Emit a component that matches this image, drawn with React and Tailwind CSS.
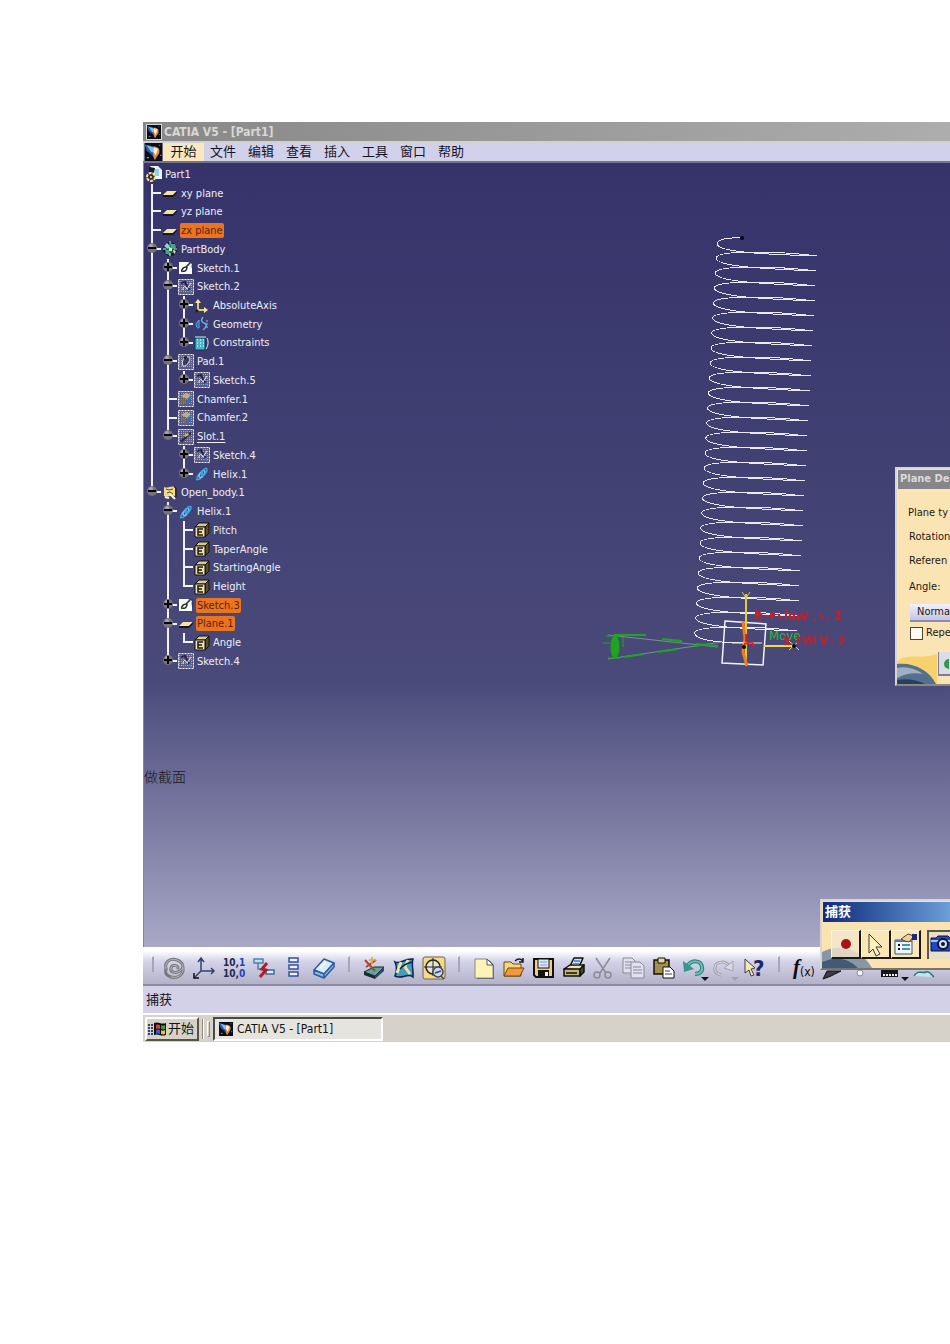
const menus = ['开始', '文件', '编辑', '查看', '插入', '工具', '窗口', '帮助'];

// guides: one char per column. ' ' empty, '|' line, 't' branch, 'l' last branch,
// '+' / '-' toggle, 'p' / 'm' toggle on the last item
const tree = [
  { guides: '', icon: 'part', label: 'Part1' },
  { guides: 't', icon: 'plane', label: 'xy plane' },
  { guides: 't', icon: 'plane', label: 'yz plane' },
  { guides: 't', icon: 'plane', label: 'zx plane', selected: true },
  { guides: '-', icon: 'body', label: 'PartBody' },
  { guides: '|+', icon: 'sketch', label: 'Sketch.1' },
  { guides: '|-', icon: 'hiddenSketch', label: 'Sketch.2' },
  { guides: '||+', icon: 'axis', label: 'AbsoluteAxis' },
  { guides: '||+', icon: 'geometry', label: 'Geometry' },
  { guides: '||p', icon: 'constraints', label: 'Constraints' },
  { guides: '|-', icon: 'pad', label: 'Pad.1' },
  { guides: '||p', icon: 'hiddenSketch', label: 'Sketch.5' },
  { guides: '|t', icon: 'chamfer', label: 'Chamfer.1' },
  { guides: '|t', icon: 'chamfer', label: 'Chamfer.2' },
  { guides: '|m', icon: 'slot', label: 'Slot.1', current: true },
  { guides: '| +', icon: 'hiddenSketch', label: 'Sketch.4' },
  { guides: '| p', icon: 'helix', label: 'Helix.1' },
  { guides: 'm', icon: 'openBody', label: 'Open_body.1' },
  { guides: ' -', icon: 'helix', label: 'Helix.1' },
  { guides: ' |t', icon: 'param', label: 'Pitch' },
  { guides: ' |t', icon: 'param', label: 'TaperAngle' },
  { guides: ' |t', icon: 'param', label: 'StartingAngle' },
  { guides: ' |l', icon: 'param', label: 'Height' },
  { guides: ' +', icon: 'sketch', label: 'Sketch.3', selected: true },
  { guides: ' -', icon: 'plane', label: 'Plane.1', selected: true },
  { guides: ' |l', icon: 'param', label: 'Angle' },
  { guides: ' p', icon: 'hiddenSketch', label: 'Sketch.4' },
];

function CatiaLogo({ className }) {
  return (
    <svg viewBox="0 0 16 16" className={className} aria-hidden="true">
      <rect width="16" height="16" fill="#0a0d1a" />
      <path d="M0 1l8 2 3 5-1 7-4-5-4-3z" fill="#2f5f9e" />
      <path d="M2 2l6 2 2 5-4-1z" fill="#8cc0e8" />
      <path d="M8 3c4 0 6 2 5 6l-4 6c-1-3-2-6-1-12z" fill="#e08a48" />
      <path d="M8 4l4 1-2 6-2-3z" fill="#fff3d0" />
      <path d="M13 2h1M14 11h1M2 13h2" stroke="#8f9cb8" />
    </svg>
  );
}

const hatch = (
  <g>
    <rect x="0" y="0" width="16" height="16" fill="#5c5c86" />
    <rect x="0.5" y="0.5" width="15" height="15" fill="none" stroke="#f0f0f6" strokeDasharray="2 1" />
    <path
      d="M1 2.5h14M1 4.5h14M1 6.5h14M1 8.5h14M1 10.5h14M1 12.5h14"
      stroke="#c0c0d4"
      strokeDasharray="1 1"
      opacity="0.7"
    />
  </g>
);

const treeIcons = {
  part: (
    <>
      <path d="M4 0h8l4 4v9H6V3z" fill="#e9f5ff" />
      <path d="M9 3l4 0 0 7-4 0z" fill="#8fd2ee" />
      <path d="M3 1l6 1-1 5-5-1z" fill="#16201a" />
      <circle cx="5" cy="11" r="4" fill="#3a3424" stroke="#f0e2ae" strokeWidth="2" strokeDasharray="3 1" />
      <circle cx="5" cy="11" r="1" fill="#f0e2ae" />
    </>
  ),
  plane: (
    <>
      <path d="M5 6h10l-4 4H1z" fill="#f3e3a6" />
      <path d="M1 10h10l4-4v2l-4 4H1z" fill="#17161a" />
    </>
  ),
  body: (
    <>
      <circle cx="8" cy="8" r="6" fill="#1e5b52" stroke="#0b1116" strokeWidth="2" strokeDasharray="3 2" />
      <path d="M2 5l3-3 3 3-2 3z" fill="#7fd6dd" />
      <path d="M8 3l5 0 1 4-4 1zM3 9l4 0 1 5-4-1z" fill="#46a48f" />
      <path d="M7 6l3 1 0 3-3 0zM11 9l3 1-2 3z" fill="#f0e29a" />
      <path d="M1 8h3M8 0v3M12 8h3M8 12v3" stroke="#c7e7ea" />
    </>
  ),
  sketch: (
    <>
      <path d="M1 2h13v12H1z" fill="#fbfbf6" />
      <path d="M4 12c-1-3 2-5 4-5l4-4M5 11c2 1 4-1 4-4" fill="none" stroke="#1c2b33" strokeWidth="1.500" />
      <path d="M10 2h5v10c-1-4-2-5-1-8z" fill="#2c3a66" />
    </>
  ),
  hiddenSketch: (
    <>
      {hatch}
      <path d="M3 4l4-1 2 4 3 5" stroke="#25254a" strokeWidth="2" fill="none" />
      <path d="M5 11c0-5 3-4 4-1l4-6" stroke="#f0f0f5" fill="none" />
      <path d="M10 13l2-3 2 4z" fill="#3f86d6" />
    </>
  ),
  axis: (
    <>
      <path d="M4 3v9h7" fill="none" stroke="#e8c860" strokeWidth="2" />
      <path d="M1 5l3-4 3 4zM10 9l4 3-4 3z" fill="#f6e6a0" />
      <path d="M4 12l-2 2" stroke="#17161a" strokeWidth="2" />
    </>
  ),
  geometry: (
    <>
      <path d="M2 8l3-4v8c-2 0-3-1-3-4z" fill="#2d5fae" stroke="#57a7e6" />
      <path d="M9 1c-2 3-2 5 1 6s3 4-1 7" fill="none" stroke="#6aa8ee" strokeWidth="1.500" />
      <path d="M13 4v8" stroke="#8fc3ee" strokeDasharray="2 1" />
    </>
  ),
  constraints: (
    <>
      <path d="M1 3h10v12H1z" fill="#48b5c8" stroke="#0c3a52" />
      <path d="M3 5h7M3 8h7M3 11h7" stroke="#c4eff2" strokeWidth="1.500" strokeDasharray="1 2" />
      <path d="M1 2h11M13 3c2 4 1 8-1 11" stroke="#d9f4f8" fill="none" />
    </>
  ),
  pad: (
    <>
      {hatch}
      <path d="M5 12c-2-5 1-9 5-9s1 7-3 9z" fill="#3a3a60" stroke="#e3e3ee" />
      <path d="M6 4l3-1" stroke="#17172c" strokeWidth="2" />
    </>
  ),
  chamfer: (
    <>
      {hatch}
      <path d="M3 5l5-3 5 2-4 4z" fill="#d0c27f" opacity="0.8" />
      <path d="M3 6l5 3v5l-5-3z" fill="#77724e" opacity="0.8" />
      <path d="M9 9l4-4v5l-4 4z" fill="#3472b8" />
    </>
  ),
  slot: (
    <>
      {hatch}
      <path d="M2 11c4-1 6-7 11-8v3c-4 1-6 6-9 8z" fill="#2d2d3c" />
      <path d="M6 6l4-2 1 2-4 2z" fill="#c9bb70" />
    </>
  ),
  helix: (
    <g fill="none" stroke="#3ba4e6" strokeWidth="1.500">
      <ellipse cx="6" cy="10" rx="2" ry="4" transform="rotate(35 6 10)" />
      <ellipse cx="8" cy="8" rx="2" ry="4" transform="rotate(35 8 8)" stroke="#7cc8f2" />
      <ellipse cx="10" cy="6" rx="2" ry="4" transform="rotate(35 10 6)" />
      <path d="M2 14l2-1M12 3l1-1" />
    </g>
  ),
  openBody: (
    <>
      <path d="M2 2c4 2 7-2 11 0v9c-4-2-7 2-11 0z" fill="#f2d983" />
      <path d="M4 4l3 1 4-1M5 8l3-1 3 2" stroke="#5d4a1d" fill="none" />
      <path d="M8 9l5 5M3 12l4 1" stroke="#fff6d0" strokeWidth="2" />
      <path d="M12 2l2 1v9" stroke="#17161a" fill="none" />
    </>
  ),
  param: (
    <>
      <path d="M1 5l4-4h10l-4 4z" fill="#d8c896" stroke="#14110a" />
      <path d="M11 5l4-4v10l-4 4z" fill="#5b4d2c" stroke="#14110a" />
      <path d="M1 5h10v10H1z" fill="#f0e2b0" stroke="#14110a" />
      <path d="M9 7H4v6h5M4 10h4" stroke="#1b170e" fill="none" strokeWidth="1.500" />
    </>
  ),
};

function Guide({ type }) {
  if (type === ' ') return <span className="w-4 shrink-0" />;
  const isToggle = '+-pm'.includes(type);
  const isLast = 'lpm'.includes(type);
  return (
    <span className="relative w-4 shrink-0 self-stretch">
      <span className={`absolute left-[7px] top-0 w-[2px] bg-[#f1f1f6] ${isLast ? 'h-1/2' : 'h-full'}`} />
      {type !== '|' && <span className="absolute left-2 top-[8px] h-[2px] w-[9px] bg-[#f1f1f6]" />}
      {isToggle && (
        <button
          aria-label={type === '+' || type === 'p' ? 'Expand' : 'Collapse'}
          className="absolute left-[3px] top-[3px] block h-[10px] w-[10px]"
        >
          <svg viewBox="0 0 10 10" className="block h-full w-full">
            <circle cx="5" cy="5" r="5" fill="#74747e" />
            <circle cx="4" cy="3" r="2" fill="#a5a5ad" />
            <path d={type === '+' || type === 'p' ? 'M1 5h8M5 1v8' : 'M1 5h8'} stroke="#08080c" strokeWidth="2" />
          </svg>
        </button>
      )}
    </span>
  );
}

function TreeRow({ item }) {
  let labelClass = 'text-[#eeeef4]';
  if (item.selected) labelClass = 'bg-[#ea7420] text-[#5c2208]';
  if (item.current) labelClass = 'text-[#eeeef4] underline underline-offset-2';
  return (
    <li className="flex flex-1 items-center">
      {[...item.guides].map((type, i) => (
        <Guide key={i} type={type} />
      ))}
      <svg viewBox="0 0 16 16" className="ml-[2px] h-4 w-4 shrink-0" aria-hidden="true">
        {treeIcons[item.icon]}
      </svg>
      <span className={`ml-[2px] rounded-xs px-px text-[11px] leading-[15px] whitespace-nowrap ${labelClass}`}>
        {item.label}
      </span>
    </li>
  );
}

// every turn leans 0.85px to the left and drops 15px
function Spring() {
  const turns = 26;
  let d = 'M142 12C126 11 117 14 117 18C118 25 150 28 217 30';
  for (let i = 0; i < turns; i++) {
    const right = 217 - i * 0.8;
    const left = 116 - i * 0.85;
    const y = 30 + i * 15;
    d += `M${right} ${y}C${right - 37} ${y - 5} ${left} ${y - 6} ${left} ${y + 2}`;
    if (i < turns - 1) {
      d += `C${left} ${y + 11} ${left + 54} ${y + 13} ${right - 1} ${y + 15}`;
    } else {
      d += `C${left} ${y + 9} ${left + 24} ${y + 12} ${left + 52} ${y + 12}`;
    }
  }
  return <path d={d} fill="none" stroke="#e9e9ee" strokeWidth="1" shapeRendering="crispEdges" />;
}

function Scene() {
  return (
    <svg viewBox="0 0 260 450" className="absolute top-[63px] left-[456px] h-[450px] w-[260px]">
      <Spring />
      <circle cx="142" cy="12" r="2" fill="#050508" />
      {/* view marker */}
      <g stroke="#1ea51e" fill="none">
        <path d="M8 409l110 12M8 433l114-17" stroke="#6c9a80" />
        <path d="M14 409h32M62 413l20 2M96 418l22 2M24 431l20-3M58 426l20-3M94 420l16-2" strokeWidth="2" />
        <path d="M3 417h8M6 410h14M8 432h12M23 411v10" />
        <ellipse cx="15" cy="421" rx="4" ry="11" fill="#1ea51e" />
      </g>
      {/* plane handle */}
      <path d="M125 395l41 3-3 41-41-2z" fill="none" stroke="#f4f4f4" strokeWidth="1.500" />
      <path d="M146 368v72" stroke="#e2ca42" strokeWidth="2" />
      <path d="M142 366l4 6 4-6" stroke="#e2ca42" fill="none" />
      <path d="M143 396l2 16-2 14 4 14" stroke="#f07a1c" strokeWidth="3" fill="none" />
      <path d="M132 417h30" stroke="#eee" />
      <path d="M144 418l8-2 2 5M146 408v8" stroke="#d92222" strokeWidth="2" fill="none" />
      <path d="M164 420h30" stroke="#e8dc48" strokeWidth="2" />
      <path d="M189 415l10 9M199 415l-10 9" stroke="#e8dc48" />
      <circle cx="194" cy="420" r="2" fill="#08080a" />
      <circle cx="144" cy="421" r="2" fill="#08080a" />
      <text x="169" y="414" fill="#22c03a" fontSize="13">Move</text>
      {/* broken up angle labels */}
      <g stroke="#c81e28" fill="none">
        <path
          d="M156 384v9M156 384l5 4-5 2 6 4M166 390h3M172 385v9M170 388h5M178 388l4 5M186 384v10M190 388h4v5h-4zM198 387v7l4-6 3 6 3-9M214 394h2M220 388l3 5M228 393h2M236 385l4 2-4 6h5"
          strokeWidth="2"
        />
        <path
          d="M184 410l5 9M189 411l-4 8M198 409v9M203 410l3 8 3-8 3 8M215 409v9M220 409l4 9 4-9M232 417h2M239 410l5 3-4 6"
          strokeWidth="2"
        />
      </g>
    </svg>
  );
}

const toolIcons = {
  update: (
    <g fill="none" strokeLinecap="round">
      <path d="M4 13C2 5 9 2 15 4s8 8 3 11-10 1-9-3 7-3 7 0" stroke="#77777f" strokeWidth="3" />
      <path d="M21 12c1 7-6 11-12 9s-6-5-5-8" stroke="#77777f" strokeWidth="3" />
      <path d="M4 13C2 5 9 2 15 4s8 8 3 11-10 1-9-3 7-3 7 0M21 12c1 7-6 11-12 9" stroke="#b9b9be" />
    </g>
  ),
  axisSystem: (
    <g fill="none" stroke="#2c4474" strokeWidth="1.500">
      <path d="M9 15V3M6 6l3-4 3 4M9 15h13M19 12l3 3-3 3M9 15l-7 7" />
      <path d="M2 17v5h5" stroke="#111" />
    </g>
  ),
  coords: (
    <g fontSize="10" fontWeight="bold" fill="#222a52">
      <text x="1" y="10">10,</text>
      <text x="17" y="10" fill="#2440b8">1</text>
      <text x="1" y="21">10,</text>
      <text x="17" y="21" fill="#2440b8">0</text>
    </g>
  ),
  compare: (
    <g fill="none" strokeWidth="1.500">
      <path d="M2 3h9v4H2zM6 7v6h5" stroke="#4488a8" />
      <path d="M14 14h8v4h-8z" stroke="#46699b" fill="#e4ecff" />
      <path d="M15 7l-5 6 4 1-6 7" stroke="#b01c28" strokeWidth="3" />
    </g>
  ),
  list: (
    <g fill="#eef0ff" stroke="#34509c" strokeWidth="1.500">
      <path d="M7 2h9v4H7zM7 9h9v4H7zM7 16h9v4H7z" />
    </g>
  ),
  catalog: (
    <g stroke="#2a5da0" strokeWidth="1.500" strokeLinejoin="round">
      <path d="M2 14L12 3l10 4-10 11z" fill="#d8ebf9" />
      <path d="M2 14v4l10 4v-4zM12 18v4l10-11V7z" fill="#8fb8e4" />
      <path d="M8 12l6-6" stroke="#fff" />
    </g>
  ),
  sketcher: (
    <g>
      <path d="M2 16l10-5 10 0-9 9z" fill="#5aa79b" stroke="#16222c" />
      <path d="M2 16l11 4v3L2 19z" fill="#1d2833" />
      <path d="M13 20l9-9v4l-9 8z" fill="#2f4a66" />
      <path d="M3 4l10 11M4 11l10-7" stroke="#b3422a" strokeWidth="2" />
      <path d="M10 1v7M7 4h7" stroke="#eba931" strokeWidth="1.500" />
    </g>
  ),
  surface: (
    <g stroke="#0f2550" strokeWidth="1.500">
      <path d="M3 6c5 3 9-4 18-3-2 6 1 13 0 18-5-5-11 3-18-1 2-5 2-9 0-14z" fill="#4a9ac0" />
      <path d="M9 6l-4 11M16 4l-3 7 5 7" fill="none" stroke="#e2e8a8" strokeWidth="3" />
      <path d="M8 13c4-5 8-6 12-7" fill="none" />
    </g>
  ),
  target: (
    <g>
      <rect x="1" y="1" width="22" height="22" rx="2" fill="#f5d985" stroke="#6e6648" />
      <circle cx="11" cy="11" r="7" fill="#e8e4cc" stroke="#22222a" strokeWidth="1.500" />
      <path d="M11 2v18M2 11h18" stroke="#22222a" />
      <circle cx="16" cy="16" r="5" fill="#c9d9ee" stroke="#3d4764" strokeWidth="1.500" />
      <path d="M13 17l6-2M19 20l3 3" stroke="#3d4764" strokeWidth="1.500" />
    </g>
  ),
  newFile: (
    <g>
      <path d="M5 4h12l5 5v14H5z" fill="#555560" />
      <path d="M3 3h12l6 6v13H3z" fill="#fdf3b8" stroke="#8a8a82" />
      <path d="M15 3v6h6z" fill="#fff" stroke="#55555c" />
    </g>
  ),
  open: (
    <g stroke="#6b4a16">
      <path d="M2 6h7l2 2h8v12H2z" fill="#f8d77c" />
      <path d="M6 12h16l-4 8H2z" fill="#f29a3a" />
      <path d="M13 5c3-3 6-2 8 0M21 2v4h-4" fill="none" stroke="#1b1b22" strokeWidth="1.500" />
    </g>
  ),
  save: (
    <g>
      <path d="M2 3h19v18H4l-2-2z" fill="#f0d074" stroke="#111" strokeWidth="2" />
      <rect x="6" y="3" width="11" height="9" fill="#dbe8f7" stroke="#111" />
      <path d="M8 6h7M8 9h7" stroke="#7aa0c8" />
      <rect x="6" y="14" width="11" height="7" fill="#111" />
      <rect x="13" y="16" width="3" height="4" fill="#f4f4f4" />
    </g>
  ),
  print: (
    <g stroke="#111" strokeWidth="1.500" strokeLinejoin="round">
      <path d="M8 10l4-8h9l-4 9z" fill="#cfe0f5" />
      <path d="M2 13l6-4h14l-4 5z" fill="#f5e4a0" />
      <path d="M2 13h16v7H2z" fill="#c4b37a" />
      <path d="M18 13l4-4v7l-4 4z" fill="#4a4534" />
      <path d="M4 17h11" />
      <path d="M12 5h6M11 8h6" stroke="#4a78c0" />
    </g>
  ),
  cut: (
    <g fill="none" stroke="#8b8b96" strokeWidth="1.500">
      <path d="M4 2l10 15M18 2L8 17" />
      <circle cx="5" cy="19" r="3" />
      <circle cx="16" cy="19" r="3" />
    </g>
  ),
  copy: (
    <g fill="#e0e0ee" stroke="#8b8b96">
      <path d="M1 2h9l3 3v12H1z" />
      <path d="M3 6h6M3 9h6M3 12h6" />
      <path d="M9 6h9l4 4v12H9z" />
      <path d="M11 11h8M11 14h9M11 17h9" />
    </g>
  ),
  paste: (
    <g>
      <path d="M2 4h15v14H2z" fill="#a58d4e" stroke="#111" strokeWidth="1.500" />
      <path d="M6 2h7v5H6z" fill="#e5d7a0" stroke="#111" />
      <path d="M11 11h7l4 4v7H11z" fill="#fff" stroke="#111" />
      <path d="M13 15h5M13 18h7" stroke="#33405e" />
    </g>
  ),
  undo: (
    <g>
      <path d="M5 11c4-8 14-7 15 0 1 4-2 7-7 7" fill="none" stroke="#2b7f7a" strokeWidth="4" />
      <path d="M5 11c4-8 14-7 15 0 1 4-2 7-7 7" fill="none" stroke="#62c3b4" strokeWidth="2" />
      <path d="M1 5l1 11 10-3z" fill="#37968e" />
    </g>
  ),
  redo: (
    <g>
      <path d="M18 11C14 4 4 5 3 11c-1 5 3 8 7 8" fill="none" stroke="#a3a3b0" strokeWidth="3" />
      <path d="M18 11C14 4 4 5 3 11c-1 5 3 8 7 8" fill="none" stroke="#dedeea" />
      <path d="M21 5v10l-9-3z" fill="#d8d8e4" stroke="#a3a3b0" />
    </g>
  ),
  help: (
    <g>
      <path d="M3 3l10 9-4 1 3 6-3 1-2-6-4 3z" fill="#f8e9a6" stroke="#33405e" />
      <text x="11" y="20" fontSize="22" fontWeight="bold" fill="#1b2a6b">?</text>
    </g>
  ),
  formula: (
    <g fill="#0b0b10">
      <text x="1" y="18" fontSize="21" fontStyle="italic" fontWeight="bold" className="font-['Liberation_Serif']">f</text>
      <text x="8" y="20" fontSize="12">(x)</text>
    </g>
  ),
  comment: <path d="M1 23l4-8h14l-10 5z" fill="#3a3a44" stroke="#111" />,
  bulb: <circle cx="8" cy="17" r="3" fill="#eef" stroke="#8b8b96" />,
  table: (
    <g>
      <path d="M-1 13h17v8H-1z" fill="#15151a" />
      <path d="M1 19h14" stroke="#eee" strokeWidth="2" strokeDasharray="2 1" />
    </g>
  ),
  wave: <path d="M2 20c4-7 8-2 12-4s6 4 8 5" fill="#bfe6ea" stroke="#2c7480" strokeWidth="1.500" />,
};

const toolGroups = [
  ['update', 'axisSystem', 'coords', 'compare', 'list', 'catalog'],
  ['sketcher', 'surface', 'target'],
  ['newFile', 'open', 'save', 'print', 'cut', 'copy', 'paste', 'undo', 'redo', 'help'],
  ['formula', 'comment', 'bulb', 'table', 'wave'],
];

const dropdownColors = { undo: '#15151c', redo: '#a3a3b0', table: '#15151c' };

function ToolButton({ name }) {
  return (
    <button aria-label={name} className="relative flex w-[30px] shrink-0 items-center justify-center">
      <svg viewBox="0 0 24 24" className="h-6 w-6 overflow-visible">
        {toolIcons[name]}
      </svg>
      {dropdownColors[name] && (
        <svg viewBox="0 0 8 4" className="absolute right-0 -bottom-px h-1 w-2">
          <path d="M0 0h8L4 4z" fill={dropdownColors[name]} />
        </svg>
      )}
    </button>
  );
}

function Toolbar() {
  return (
    <div className="flex h-[39px] items-center bg-linear-to-b from-white from-10% via-[#d3d2e8] via-40% to-[#b3b2c8] border-b-2 border-[#8c8ba2] pt-1">
      {toolGroups.map((group, i) => (
        <div key={i} className="flex shrink-0">
          <span className={`flex shrink-0 ${i === 0 ? 'w-4' : 'w-5'}`}>
            <span className="ml-2 h-4 w-[3px] border-t border-r-2 border-t-white border-r-[#a5a4b8]" />
          </span>
          {group.map((name) => (
            <ToolButton key={name} name={name} />
          ))}
        </div>
      ))}
    </div>
  );
}

function PlaneDialog() {
  return (
    <section className="absolute top-[304px] right-0 w-[55px] overflow-hidden border-2 border-r-0 border-[#d8d6d2] border-b-[#8a8880] bg-[#fbe4b4] text-[11px] text-[#1c1a16]">
      <div className="m-px mr-0 flex h-[19px] items-center bg-[#85858a] pl-[2px] font-bold whitespace-nowrap text-[#dcdad4]">
        Plane De
      </div>
      <div className="flex h-[194px] flex-col whitespace-nowrap">
        <p className="mt-[15px] pl-[11px] leading-4">Plane ty</p>
        <p className="mt-2 pl-3 leading-4">Rotation</p>
        <p className="mt-2 pl-3 leading-4">Referen</p>
        <p className="mt-[10px] pl-3 leading-4">Angle:</p>
        <button className="mt-[9px] ml-[13px] border-b-2 border-b-[#8d8cae] bg-linear-to-b from-[#f2f1fb] to-[#c6c5e4] pl-[7px] text-left leading-4">
          Norma
        </button>
        <label className="mt-[3px] flex items-center gap-[3px] pl-[13px] leading-4">
          <input type="checkbox" className="h-[13px] w-[13px] shrink-0 appearance-none border border-[#4a463c] bg-[#fffbee]" />
          Repe
        </label>
        <div className="mt-auto flex items-end justify-between">
          <svg viewBox="0 0 40 34" className="h-[34px] w-10" aria-hidden="true">
            <path d="M0 12C8 2 24 10 40 4v30H0z" fill="#f6d16c" />
            <path d="M0 34V14c16-2 32 6 39 20z" fill="#55708e" />
            <path d="M0 18c8-2 18 0 26 6-10-2-18 0-26 4z" fill="#9fb0c0" />
            <path d="M0 34v-4c10-2 20 0 28 4z" fill="#27405c" />
          </svg>
          <button aria-label="OK" className="mb-2 h-6 w-3 shrink-0 border-b-2 border-l border-[#7c7b98] bg-[#dcdbe8]">
            <svg viewBox="0 0 10 20" className="h-5 w-[10px]">
              <circle cx="10" cy="11" r="5" fill="#2f9a4a" />
            </svg>
          </button>
        </div>
      </div>
    </section>
  );
}

function CaptureWindow() {
  return (
    <section className="absolute right-0 bottom-[72px] w-[130px] overflow-hidden border-2 border-r-0 border-[#d8d6d2] border-b-[#77756e] bg-[#fae3b0]">
      <h2 className="mt-px ml-px h-5 bg-linear-to-r from-[#12297a] to-[#6d9fd8] pl-[2px] text-[13px] leading-5 font-bold text-white">
        捕获
      </h2>
      <div className="relative h-[46px]">
        <svg viewBox="0 0 60 24" className="absolute bottom-0 left-0 h-6 w-[60px]" aria-hidden="true">
          <path d="M0 24V8C18-2 40 6 50 24z" fill="#8797a8" />
          <path d="M0 24v-6c14-6 26-4 36 6z" fill="#405a78" />
        </svg>
        <div className="relative flex pt-2 pl-[9px]">
          <button aria-label="Record" className="h-[29px] w-[30px] shrink-0 border border-r-2 border-b-2 border-[#fff7dc] border-r-[#1b1a18] border-b-[#1b1a18] bg-[#f3e6cc]/80">
            <svg viewBox="0 0 27 26" className="h-[26px] w-[27px]">
              <circle cx="14" cy="13" r="5" fill="#a81414" />
            </svg>
          </button>
          <button aria-label="Select" className="h-[29px] w-[30px] shrink-0 border border-r-2 border-b-2 border-[#fff7dc] border-r-[#1b1a18] border-b-[#1b1a18] bg-[#fbe6b6]">
            <svg viewBox="0 0 27 26" className="h-[26px] w-[27px]">
              <path d="M7 3l13 13-6 0 4 7-4 2-3-7-4 4z" fill="#fff2bd" stroke="#3a3a42" />
            </svg>
          </button>
          <button aria-label="Options" className="h-[29px] w-[30px] shrink-0 border border-r-2 border-b-2 border-[#fff7dc] border-r-[#1b1a18] border-b-[#1b1a18] bg-[#fbe6b6]">
            <svg viewBox="0 0 27 26" className="h-[26px] w-[27px]">
              <path d="M3 9h17v14H3z" fill="#eef6fb" stroke="#335a78" />
              <path d="M3 9h17v2H3z" fill="#4f7fb0" />
              <path d="M6 14h2M6 18h2" stroke="#111" strokeWidth="2" />
              <path d="M10 14h8M10 18h8" stroke="#4f8fc0" strokeWidth="2" />
              <path d="M9 8l7-5 6 2-5 6-4-1z" fill="#f0cf9c" stroke="#5a4022" />
              <path d="M20 3h5v6h-5z" fill="#1b2a80" />
            </svg>
          </button>
          <button aria-label="Photo" className="ml-[6px] h-[29px] w-[30px] shrink-0 border-t-2 border-l-2 border-[#5c5648] bg-[#e9dec6]">
            <svg viewBox="0 0 28 27" className="h-[27px] w-7">
              <path d="M2 6h5l2-2h10l2 2h5v13H2z" fill="#2347c0" stroke="#0b1236" />
              <path d="M2 9h24" stroke="#9fc0f4" strokeWidth="2" />
              <circle cx="14" cy="12" r="5" fill="#d4e2f2" stroke="#0b1236" strokeWidth="2" />
              <circle cx="14" cy="12" r="2" fill="#0b1236" />
            </svg>
          </button>
        </div>
      </div>
    </section>
  );
}

function Taskbar() {
  return (
    <footer className="flex h-[29px] items-center border-t-2 border-white bg-[#d6d2ca] pl-[2px] text-[#15140f]">
      <button className="flex h-6 w-[54px] items-center gap-px border-2 border-white border-r-[#55534c] border-b-[#55534c] pl-px text-[13px]">
        <svg viewBox="0 0 19 16" className="h-4 w-[19px] shrink-0" aria-hidden="true">
          <path d="M6 2c4-2 7 2 12 0v12c-5 2-8-2-12 0z" fill="#0c0c10" />
          <path d="M8 4c2-1 3 0 4 0v4c-1 0-2-1-4 0z" fill="#d8402c" />
          <path d="M13 4c1 1 2 1 4 0v4c-2 1-3 0-4 0z" fill="#3f9a4a" />
          <path d="M8 9c2-1 3 0 4 0v4c-1 0-2-1-4 0z" fill="#3560c8" />
          <path d="M13 9c1 1 2 1 4 0v4c-2 1-3 0-4 0z" fill="#e8c238" />
          <path d="M0 4h5M0 7h5M0 10h5M0 13h5" stroke="#34406e" strokeWidth="2" strokeDasharray="2 1" />
        </svg>
        <span className="whitespace-nowrap">开始</span>
      </button>
      <span className="ml-[3px] h-5 w-[2px] border-r border-l border-[#8b8980] border-r-white" />
      <span className="ml-[3px] h-4 w-[3px] border border-white border-r-[#8b8980] border-b-[#8b8980]" />
      <button className="ml-[3px] flex h-6 w-[170px] items-center gap-[3px] border-2 border-[#4b4943] border-r-white border-b-white bg-[#e6e4df] pl-[3px] text-[12px]">
        <CatiaLogo className="h-[14px] w-4 shrink-0" />
        <span className="whitespace-nowrap">CATIA V5 - [Part1]</span>
      </button>
    </footer>
  );
}

export default function App() {
  return (
    <div className="min-h-screen overflow-hidden bg-white pt-[122px] pb-[302px] pl-[143px] font-['DejaVu_Sans_Condensed','Noto_Sans_CJK_SC',sans-serif]">
      <div className="relative">
        <header className="flex h-[19px] items-center gap-[2px] bg-linear-to-r from-[#888888] to-[#adadad] pl-[3px]">
          <CatiaLogo className="h-4 w-4 border border-[#d8d8d8]" />
          <h1 className="text-[12px] font-bold whitespace-nowrap text-[#d9d7d2]">CATIA V5 - [Part1]</h1>
        </header>
        <nav className="flex h-[22px] items-center border-t-2 border-b-2 border-t-[#d2d0d4] border-b-[#74748a] bg-[#d2d1ec] pl-px">
          <CatiaLogo className="h-[18px] w-[19px] shrink-0" />
          {menus.map((name, i) => (
            <button
              key={name}
              className={`h-[18px] shrink-0 text-[13px] leading-[18px] whitespace-nowrap text-[#15141c] ${i === 0 ? 'w-[41px] bg-[#fbe7bd]' : 'w-[38px]'}`}
            >
              {name}
            </button>
          ))}
        </nav>

        <main className="relative min-h-[784px] border-l border-[#85859a] bg-linear-to-b from-[#35336a] via-[#4a4a7a] via-66% to-[#a9a8c6] pt-[2px]">
          <ul className="flex h-[506px] flex-col">
            {tree.map((item, i) => (
              <TreeRow key={i} item={item} />
            ))}
          </ul>
          <Scene />
          <PlaneDialog />
          <p className="absolute top-[604px] left-0 text-[14px] leading-5 font-light text-[#16161c]">做截面</p>
        </main>

        <Toolbar />
        <div className="flex h-[27px] items-center bg-[#d2d1e8] pl-[3px] text-[13px] text-[#15141c]">捕获</div>
        <Taskbar />
        <CaptureWindow />
      </div>
    </div>
  );
}
